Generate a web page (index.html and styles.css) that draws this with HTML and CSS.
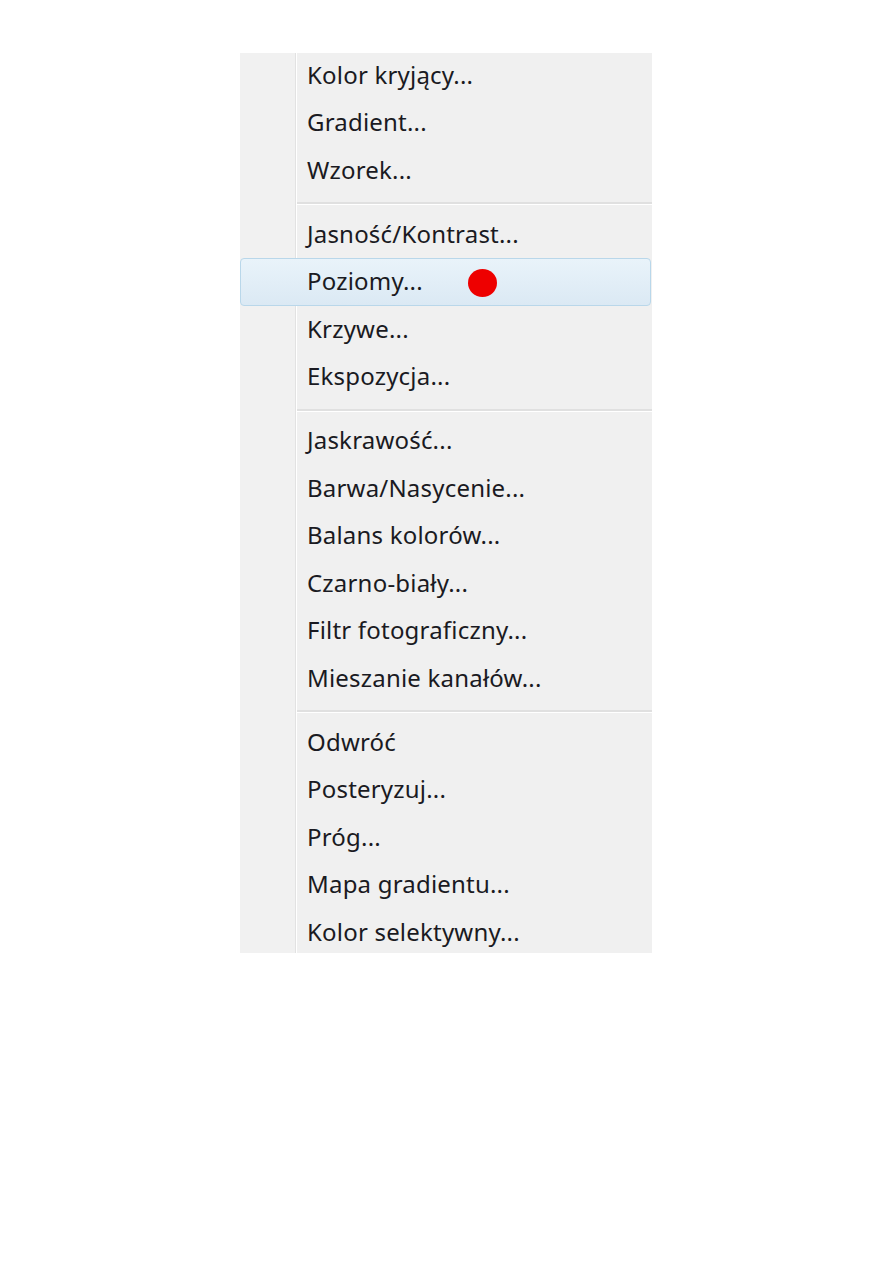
FILE: index.html
```html
<!DOCTYPE html>
<html lang="pl">
<head>
<meta charset="utf-8">
<title>Menu</title>
<link rel="stylesheet" href="styles.css">
</head>
<body>
<div class="page">
  <div class="menu">
    <div class="item">Kolor kryjący...</div>
    <div class="item">Gradient...</div>
    <div class="item">Wzorek...</div>
    <div class="sep"></div>
    <div class="item">Jasność/Kontrast...</div>
    <div class="item active">Poziomy...<span class="dot"></span></div>
    <div class="item">Krzywe...</div>
    <div class="item">Ekspozycja...</div>
    <div class="sep"></div>
    <div class="item">Jaskrawość...</div>
    <div class="item">Barwa/Nasycenie...</div>
    <div class="item">Balans kolorów...</div>
    <div class="item">Czarno-biały...</div>
    <div class="item">Filtr fotograficzny...</div>
    <div class="item">Mieszanie kanałów...</div>
    <div class="sep"></div>
    <div class="item">Odwróć</div>
    <div class="item">Posteryzuj...</div>
    <div class="item">Próg...</div>
    <div class="item">Mapa gradientu...</div>
    <div class="item">Kolor selektywny...</div>
  </div>
</div>
</body>
</html>
```

FILE: styles.css
```css
html, body {
  margin: 0;
  padding: 0;
  background: #ffffff;
}
.page {
  padding-top: 53px;
  padding-left: 240px;
}
.menu {
  width: 412px;
  height: 900px;
  overflow: hidden;
  background: linear-gradient(to right, #f1f1f1 0, #f1f1f1 55px, #e2e2e2 55px, #e2e2e2 56px, #ffffff 56px, #ffffff 57px, #f0f0f0 57px);
  display: flex;
  flex-direction: column;
  font-family: "Noto Sans", "Open Sans", sans-serif;
  font-size: 24px;
  letter-spacing: 0.2px;
  color: #1a1a22;
}
.item {
  height: 47.5px;
  flex-shrink: 0;
  box-sizing: border-box;
  display: flex;
  align-items: center;
  padding-left: 67px;
  padding-bottom: 5px;
  position: relative;
}
.item.active {
  background: linear-gradient(to bottom, #e9f3fa, #dbe9f4);
  border: 1px solid #b9d7ea;
  border-radius: 4px;
  padding-left: 66px;
  padding-top: 3px;
  padding-bottom: 5px;
  margin-right: 1px;
  margin-top: -1.5px;
  margin-bottom: 1.5px;
}
.dot {
  position: absolute;
  left: 227px;
  top: 10px;
  width: 29px;
  height: 28px;
  border-radius: 50%;
  background: #ee0000;
}
.sep {
  height: 16.5px;
  flex-shrink: 0;
  margin-left: 57px;
  display: flex;
  flex-direction: column;
  justify-content: center;
}
.sep::before {
  content: "";
  display: block;
  height: 2px;
  background: #e0e0e0;
}
.sep::after {
  content: "";
  display: block;
  height: 1px;
  background: #ffffff;
}
```
